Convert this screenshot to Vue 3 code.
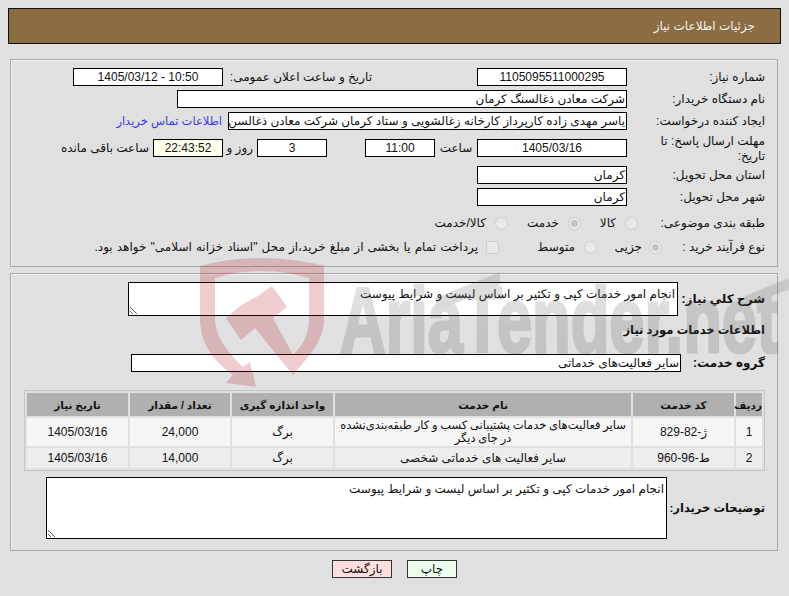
<template>
  <div class="page" dir="rtl">
    <div class="title-bar"><span>جزئیات اطلاعات نیاز</span></div>

    <section class="panel top-panel">
      <div class="row">
        <label class="lbl">شماره نیاز:</label>
        <div class="field w150 center">1105095511000295</div>
        <label class="lbl2">تاریخ و ساعت اعلان عمومی:</label>
        <div class="field w150 center">10:50 - 1405/03/12</div>
      </div>
      <div class="row">
        <label class="lbl">نام دستگاه خریدار:</label>
        <div class="field w450">شرکت معادن ذغالسنگ کرمان</div>
      </div>
      <div class="row">
        <label class="lbl">ایجاد کننده درخواست:</label>
        <div class="field w399">یاسر مهدی زاده کارپرداز کارخانه زغالشویی و ستاد کرمان شرکت معادن ذغالسن</div>
        <a class="contact">اطلاعات تماس خریدار</a>
      </div>
      <div class="row deadline">
        <label class="lbl">مهلت ارسال پاسخ: تا تاریخ:</label>
        <div class="field w150 center">1405/03/16</div>
        <span class="txt time-lbl">ساعت</span>
        <div class="field w70 center">11:00</div>
        <div class="field w70 center days">3</div>
        <span class="txt day-lbl">روز و</span>
        <div class="field w70 center remain">22:43:52</div>
        <span class="txt rem-lbl">ساعت باقی مانده</span>
      </div>
      <div class="row after-deadline">
        <label class="lbl">استان محل تحویل:</label>
        <div class="field w150">کرمان</div>
      </div>
      <div class="row">
        <label class="lbl">شهر محل تحویل:</label>
        <div class="field w150">کرمان</div>
      </div>
      <div class="row cat-row">
        <label class="lbl lbl-short">طبقه بندی موضوعی:</label>
        <template v-for="c in categories" :key="c.text">
          <span class="radio" :class="{ on: c.on }"></span>
          <span class="txt opt" :style="{ width: c.width + 'px' }">{{ c.text }}</span>
        </template>
      </div>
      <div class="row buy-row">
        <label class="lbl lbl-shorter">نوع فرآیند خرید :</label>
        <span class="radio on first"></span>
        <span class="txt opt w-jz">جزیی</span>
        <span class="radio"></span>
        <span class="txt opt w-mt">متوسط</span>
        <span class="check"></span>
        <span class="txt pay">پرداخت تمام یا بخشی از مبلغ خرید،از محل "اسناد خزانه اسلامی" خواهد بود.</span>
      </div>
    </section>

    <section class="panel bottom-panel">
      <div class="row desc-row">
        <label class="lbl lbl-bold desc-lbl">شرح کلي نیاز:</label>
        <textarea class="area small" readonly>انجام امور خدمات کپی و تکثیر بر اساس لیست و شرایط پیوست</textarea>
      </div>
      <h4 class="sub-head">اطلاعات خدمات مورد نیاز</h4>
      <div class="row group-row">
        <label class="lbl lbl-bold group-lbl">گروه خدمت:</label>
        <div class="field w550">سایر فعالیت‌های خدماتی</div>
      </div>

      <table class="items">
        <colgroup>
          <col style="width:26px" />
          <col style="width:101px" />
          <col style="width:296px" />
          <col style="width:101px" />
          <col style="width:100px" />
          <col style="width:101px" />
        </colgroup>
        <thead>
          <tr>
            <th>ردیف</th>
            <th>کد خدمت</th>
            <th>نام خدمت</th>
            <th>واحد اندازه گیری</th>
            <th>تعداد / مقدار</th>
            <th>تاریخ نیاز</th>
          </tr>
        </thead>
        <tbody>
          <tr v-for="r in rows" :key="r.no">
            <td>{{ r.no }}</td>
            <td>{{ r.code }}</td>
            <td class="name-cell" :class="{ tight: r.no === 1 }">{{ r.name }}</td>
            <td>{{ r.unit }}</td>
            <td>{{ r.qty }}</td>
            <td>{{ r.date }}</td>
          </tr>
        </tbody>
      </table>

      <div class="row note-row">
        <label class="lbl lbl-bold note-lbl">توضیحات خریدار:</label>
        <textarea class="area big" readonly>انجام امور خدمات کپی و تکثیر بر اساس لیست و شرایط پیوست</textarea>
      </div>
    </section>

    <div class="actions">
      <button class="btn print">چاپ</button>
      <button class="btn back">بازگشت</button>
    </div>

    <!-- see-through watermark lying over the whole form -->
    <svg class="watermark" width="789" height="596" viewBox="0 0 789 596">
      <defs>
        <linearGradient id="wm-grey" x1="0" y1="0" x2="0" y2="1">
          <stop offset="0" stop-color="#6e6e6e" />
          <stop offset="1" stop-color="#4a4a4a" />
        </linearGradient>
      </defs>
      <g fill="#b40514" opacity="0.2">
        <path d="M200 266Q262 250 324 266L324 320C324 340 310 355 293 375L255 328L241 340L226 318L239 307L243 304L258 296L272 286L287 307L273 318L293 355C303 345 309 335 309 318L309 278Q262 264 215 278L215 318C215 338 228 352 243 367L250 362L256 387L226 383L233 375C215 362 200 345 200 318Z" />
      </g>
      <g fill="url(#wm-grey)" stroke="url(#wm-grey)" opacity="0.2">
        <text x="340" y="352" class="wm-text" stroke-width="3" textLength="438" lengthAdjust="spacingAndGlyphs">AriaTender.net</text>
        <polygon stroke="none" points="436,298 500,272 500,285 436,311" />
        <polygon stroke="none" points="745,296 789,278 789,289 745,307" />
      </g>
    </svg>
  </div>
</template>

<script setup>
const categories = [
  { text: 'کالا', on: false, width: 35 },
  { text: 'خدمت', on: true, width: 51 },
  { text: 'کالا/خدمت', on: false, width: 60 },
]

const rows = [
  {
    no: 1,
    code: 'ژ-82-829',
    name: 'سایر فعالیت‌های خدمات پشتیبانی کسب و کار طبقه‌بندی‌نشده در جای دیگر',
    unit: 'برگ',
    qty: '24,000',
    date: '1405/03/16',
  },
  {
    no: 2,
    code: 'ط-96-960',
    name: 'سایر فعالیت های خدماتی شخصی',
    unit: 'برگ',
    qty: '14,000',
    date: '1405/03/16',
  },
]
</script>

<style>
body {
  margin: 0;
  background: #e0e0e0;
}
</style>

<style scoped>
.page {
  position: relative;
  width: 789px;
  height: 596px;
  overflow: hidden;
  padding: 8px 8px 0;
  box-sizing: border-box;
  font-family: "Liberation Sans", "DejaVu Sans", sans-serif;
  font-size: 12px;
  color: #111;
}

.watermark {
  position: absolute;
  left: 0;
  top: 0;
  direction: ltr;
  pointer-events: none;
}

.wm-text {
  font-family: "Liberation Sans", sans-serif;
  font-weight: 700;
  font-size: 92px;
  direction: ltr;
  unicode-bidi: bidi-override;
}

.title-bar {
  height: 34px;
  background: #8c6c42;
  border: 1px solid #111;
  color: #f2f2f2;
  display: flex;
  align-items: center;
  padding-right: 25px;
}

.panel {
  margin: 15px 3px 0 2px;
  border: 1px solid #a8a8a8;
  box-shadow: inset 1px 1px 0 #f0f0f0;
  padding-right: 12px;
}

.top-panel {
  height: 198px;
  padding-top: 8px;
}

.bottom-panel {
  height: 276px;
  margin-top: 6px;
}

.row {
  display: flex;
  align-items: center;
  min-height: 18px;
  margin-top: 4px;
}

.top-panel .row:first-child {
  margin-top: 0;
}

.lbl {
  width: 138px;
  flex: none;
  line-height: 15px;
}

.lbl2 {
  width: 149px;
  margin-right: 105px;
  flex: none;
  padding-left: 5px;
  box-sizing: border-box;
}

.field {
  height: 18px;
  line-height: 16px;
  box-sizing: border-box;
  background: #fff;
  border: 1px solid #000;
  padding: 0 1px;
  overflow: hidden;
  white-space: nowrap;
  flex: none;
}

.center {
  text-align: center;
}

.w70 { width: 70px; }
.w150 { width: 150px; }
.w399 { width: 399px; }
.w450 { width: 450px; }
.w550 { width: 550px; }

.contact {
  margin-right: 6px;
  color: #3a3af0;
  white-space: nowrap;
  font-size: 11.5px;
}

.deadline {
  align-items: flex-start;
  min-height: 30px;
}

.deadline .field,
.deadline .txt {
  margin-top: 5px;
}

.deadline .lbl {
  padding-left: 10px;
  box-sizing: border-box;
}

.txt {
  white-space: nowrap;
  line-height: 18px;
}

.time-lbl {
  width: 42px;
  text-align: center;
}

.days {
  margin-right: 38px;
}

.day-lbl {
  width: 34px;
  box-sizing: border-box;
  padding-right: 4px;
}

.remain {
  background: #ffffee;
}

.rem-lbl {
  margin-right: 4px;
}

.after-deadline {
  margin-top: 2px;
}

.cat-row {
  margin-top: 8px;
}

.buy-row {
  margin-top: 6px;
}

.lbl-short { width: 127px; }
.lbl-shorter { width: 103px; }

.radio {
  width: 13px;
  height: 13px;
  box-sizing: border-box;
  flex: none;
  border: 1px solid #cdcdcd;
  border-radius: 50%;
  background: #e9e9e9;
  position: relative;
  margin-left: 9px;
}

.radio.first {
  margin-left: 7px;
}

.radio.on::after {
  content: "";
  position: absolute;
  left: 2px;
  top: 2px;
  width: 7px;
  height: 7px;
  border-radius: 50%;
  background: #c4c4c4;
}

.opt {
  flex: none;
}

.w-jz { width: 45px; }
.w-mt { width: 76px; }

.check {
  width: 13px;
  height: 13px;
  box-sizing: border-box;
  flex: none;
  border: 1px solid #cdcdcd;
  border-radius: 2px;
  background: #e9e9e9;
  margin-left: 8px;
}

.pay {
  word-spacing: 0.8px;
}

.lbl-bold {
  font-weight: 700;
  white-space: nowrap;
}

.desc-row {
  margin-top: 8px;
}

.desc-lbl {
  width: 87px;
}

.area {
  display: block;
  box-sizing: border-box;
  width: 550px;
  background: #fff;
  border: 1px solid #000;
  border-radius: 0;
  padding: 4px 2px 2px;
  margin: 0;
  font: inherit;
  color: inherit;
  outline: none;
}

.area.small {
  height: 34px;
}

.area.big {
  width: 621px;
  height: 62px;
}

.sub-head {
  margin: 5px 0 0;
  font-size: 11.5px;
  line-height: 18px;
  font-weight: 700;
}

.group-row {
  margin-top: 15px;
}

.group-lbl {
  width: 84px;
}

.items {
  width: 741px;
  margin: 18px 0 0;
  table-layout: fixed;
  border-collapse: separate;
  border-spacing: 2px;
  border: 1px solid #c4c4c4;
}

.items th {
  height: 23px;
  padding: 0;
  background: #b0b0b0;
  font-size: 10.5px;
  font-weight: 700;
}

.items td {
  padding: 1px 2px;
  text-align: center;
  line-height: 13px;
  height: 18px;
}

.items td.tight {
  padding: 1px 0;
  font-size: 11.5px;
  word-spacing: -0.5px;
}

.items tbody tr:nth-child(1) td {
  background: #f5f5f5;
}

.items tbody tr:nth-child(2) td {
  background: #ededed;
}

.note-row {
  margin-top: 6px;
}

.note-lbl {
  width: 98px;
  font-size: 11.5px;
}

.actions {
  display: flex;
  justify-content: center;
  gap: 15px;
  margin-top: 9px;
}

.btn {
  height: 18px;
  padding: 0;
  border: 1px solid #333;
  font: inherit;
  color: inherit;
  line-height: 16px;
}

.print {
  width: 50px;
  background: #eeffee;
}

.back {
  width: 60px;
  background: #ffdede;
}
</style>
